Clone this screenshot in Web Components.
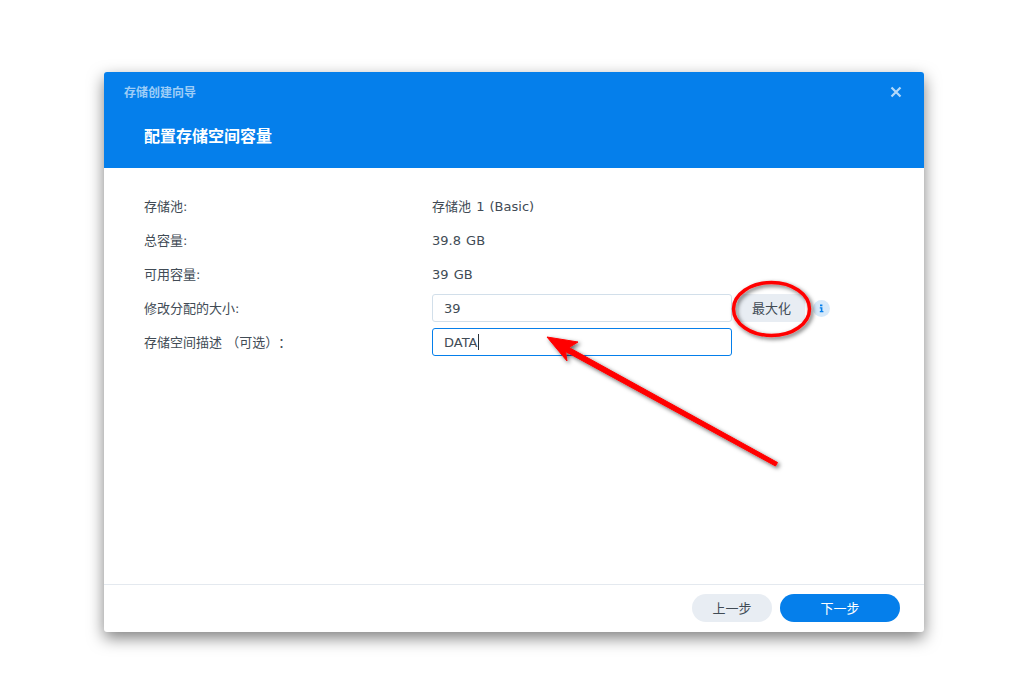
<!DOCTYPE html>
<html lang="zh">
<head>
<meta charset="utf-8">
<title>存储创建向导</title>
<style>
    html, body { margin: 0; height: 100%; background: #fff; }
    body {
        font-family: "DejaVu Sans", "Noto Sans CJK SC", sans-serif;
        font-size: 13px;
        color: #414b55;
        padding: 72px 97px 65px 104px;
        box-sizing: border-box;
        position: relative;
        overflow: hidden;
        text-spacing-trim: space-all;
    }
</style>
</head>
<body>
<wizard-dialog caption="存储创建向导" heading="配置存储空间容量">
    <form-row label="存储池:" lift>存储池 1 (Basic)</form-row>
    <form-row label="总容量:">39.8 GB</form-row>
    <form-row label="可用容量:">39 GB</form-row>
    <form-row label="修改分配的大小:">
        <text-field value="39"></text-field>
        <pill-button kind="flat">最大化</pill-button>
        <info-badge></info-badge>
    </form-row>
    <form-row label="存储空间描述 （可选）：">
        <text-field value="DATA" focused></text-field>
    </form-row>
    <pill-button slot="footer" kind="secondary">上一步</pill-button>
    <pill-button slot="footer" kind="primary">下一步</pill-button>
</wizard-dialog>
<red-markup></red-markup>
<script>
class WizardDialog extends HTMLElement {
    constructor() {
        super();
        this.attachShadow({ mode: 'open' });
        this.shadowRoot.innerHTML = `
            <style>
                :host {
                    display: flex;
                    flex-direction: column;
                    width: 820px;
                    height: 560px;
                    background: #fff;
                    border-radius: 3px;
                    box-shadow: 0 6px 16px rgba(0, 0, 0, 0.5);
                }
                header {
                    height: 96px;
                    box-sizing: border-box;
                    background: #057feb;
                    border-radius: 3px 3px 0 0;
                    padding: 10px 20px 0 20px;
                    color: #fff;
                }
                .top {
                    display: flex;
                    justify-content: space-between;
                    align-items: center;
                    height: 18px;
                }
                .caption {
                    font-size: 12px;
                    font-weight: 700;
                    color: #9dcdf7;
                }
                svg { width: 12px; height: 12px; margin: 2px 2px 0 0; }
                h1 {
                    margin: 26px 0 0 20px;
                    font-size: 16px;
                    line-height: 22px;
                    font-weight: 700;
                }
                main {
                    flex: 1;
                    padding: 24px 40px 0 40px;
                    display: flex;
                    flex-direction: column;
                }
                footer {
                    height: 48px;
                    box-sizing: border-box;
                    border-top: 1px solid #e4e9ef;
                    padding: 9px 24px 0 0;
                    display: flex;
                    justify-content: flex-end;
                    gap: 8px;
                }
            </style>
            <header>
                <div class="top">
                    <span class="caption"></span>
                    <svg viewBox="0 0 12 12"><path d="M1.5 1.5l9 9M10.5 1.5l-9 9" stroke="#b3d9fa" stroke-width="2.2" fill="none"/></svg>
                </div>
                <h1></h1>
            </header>
            <main><slot></slot></main>
            <footer><slot name="footer"></slot></footer>
        `;
    }

    connectedCallback() {
        this.shadowRoot.querySelector('.caption').textContent = this.getAttribute('caption');
        this.shadowRoot.querySelector('h1').textContent = this.getAttribute('heading');
    }
}

class FormRow extends HTMLElement {
    constructor() {
        super();
        this.attachShadow({ mode: 'open' });
        this.shadowRoot.innerHTML = `
            <style>
                :host {
                    display: flex;
                    align-items: center;
                    height: 28px;
                    margin-bottom: 6px;
                    font-size: 13px;
                    color: #414b55;
                    word-spacing: 1px;
                }
                .label { width: 288px; flex: none; white-space: pre; padding-bottom: 2px; word-spacing: 0; }
                .value { display: flex; align-items: center; }
                :host([lift]) .value { padding-bottom: 2px; }
            </style>
            <span class="label"></span>
            <span class="value"><slot></slot></span>
        `;
    }

    connectedCallback() {
        this.shadowRoot.querySelector('.label').textContent = this.getAttribute('label');
    }
}

class TextField extends HTMLElement {
    constructor() {
        super();
        this.attachShadow({ mode: 'open' });
        this.shadowRoot.innerHTML = `
            <style>
                :host {
                    display: flex;
                    align-items: center;
                    width: 300px;
                    height: 28px;
                    box-sizing: border-box;
                    padding: 0 11px;
                    background: #fff;
                    border: 1px solid #d2dfea;
                    border-radius: 3px;
                }
                :host([focused]) { border-color: #057feb; }
                i { display: none; width: 1px; height: 16px; background: #2b333b; }
                :host([focused]) i { display: block; }
            </style>
            <span></span><i></i>
        `;
    }

    connectedCallback() {
        this.shadowRoot.querySelector('span').textContent = this.getAttribute('value');
    }
}

class PillButton extends HTMLElement {
    constructor() {
        super();
        this.attachShadow({ mode: 'open' });
        this.shadowRoot.innerHTML = `
            <style>
                :host {
                    display: flex;
                    align-items: center;
                    justify-content: center;
                    height: 28px;
                    box-sizing: border-box;
                    padding-bottom: 2px;
                    font-size: 13px;
                }
                :host([kind=secondary]) { width: 80px; border-radius: 14px; background: #e8edf3; color: #414b55; }
                :host([kind=primary]) { width: 120px; border-radius: 14px; background: #057feb; color: #fff; }
                :host([kind=flat]) { width: 67px; margin-left: 6px; background: #e8edf3; color: #414b55; }
            </style>
            <slot></slot>
        `;
    }
}

class InfoBadge extends HTMLElement {
    constructor() {
        super();
        this.attachShadow({ mode: 'open' });
        this.shadowRoot.innerHTML = `
            <style>
                :host {
                    display: block;
                    width: 17px;
                    height: 17px;
                    margin-left: 8px;
                }
                svg { display: block; }
            </style>
            <svg width="17" height="17" viewBox="0 0 17 17">
                <circle cx="8.5" cy="8.5" r="8.5" fill="#d6e9fa"/>
                <path d="M7 4.5h2.4v1.8H7zM6.8 7.2h2.6v3.8h1v1.2H6.8V11h1V8.4h-1z" fill="#057feb"/>
            </svg>
        `;
    }
}

class RedMarkup extends HTMLElement {
    constructor() {
        super();
        this.attachShadow({ mode: 'open' });
        this.shadowRoot.innerHTML = `
            <style>
                :host { position: absolute; left: 0; top: 0; width: 1021px; height: 697px; pointer-events: none; }
                svg { display: block; }
            </style>
            <svg width="1021" height="697" viewBox="0 0 1021 697">
                <defs>
                    <filter id="sh" x="-20%" y="-20%" width="140%" height="140%">
                        <feDropShadow dx="2" dy="2" stdDeviation="2" flood-color="#000" flood-opacity="0.6"/>
                    </filter>
                </defs>
                <ellipse cx="771.5" cy="309" rx="38" ry="26.5" fill="none" stroke="#f00" stroke-width="3.5" filter="url(#sh)"/>
                <path d="M547 337L578 342L569 347.5L777.5 462.5L775.5 466L565.5 351.5L567 361Z" fill="#f00" stroke="#f00" stroke-width="1" stroke-linejoin="round" filter="url(#sh)"/>
            </svg>
        `;
    }
}

customElements.define('wizard-dialog', WizardDialog);
customElements.define('form-row', FormRow);
customElements.define('text-field', TextField);
customElements.define('pill-button', PillButton);
customElements.define('info-badge', InfoBadge);
customElements.define('red-markup', RedMarkup);
</script>
</body>
</html>
